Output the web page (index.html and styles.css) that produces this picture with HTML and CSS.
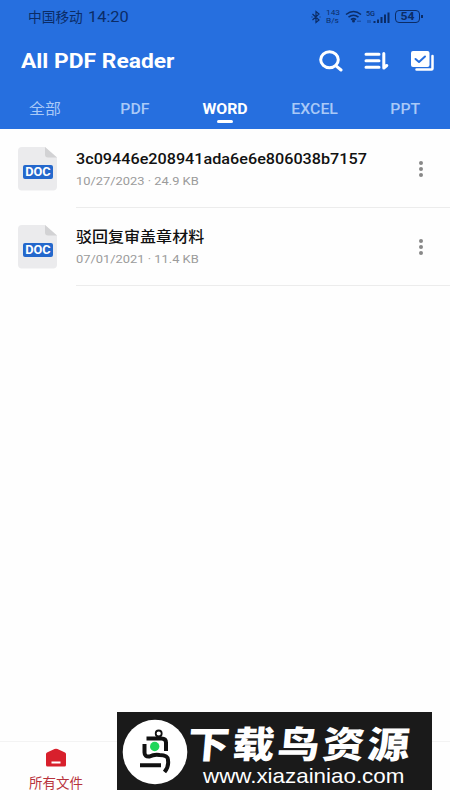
FILE: index.html
```
<!DOCTYPE html>
<html lang="zh-CN">
<head>
    <meta charset="UTF-8">
    <title>All PDF Reader</title>
    <link rel="stylesheet" href="styles.css">
</head>
<body>
<div class="page">
    <!-- 头部 -->
    <div class="header">
        <div class="status">
            <div class="carrier"><span class="name">中国移动</span><span class="time">14:20</span></div>
            <svg class="bluetooth" width="10" height="14" viewBox="0 0 10 14"><path d="M1.500 4l6.500 6-3 2.500v-11l3 2.500-6.500 6M.5 7h1M8.500 7h1"/></svg>
            <div class="speed"><span>143</span><span>B/s</span></div>
            <svg class="wifi" width="18" height="13" viewBox="0 0 18 13"><path d="M1 4.500q7.500-6 15 0M3.500 7.200q5-4 10 0M6 9.600q2.500-2 5 0"/><circle cx="8.500" cy="11" r="1.500"/><path class="thin" d="M12 11.200h4"/></svg>
            <svg class="signal" width="25" height="14" viewBox="0 0 25 14"><text x="0" y="6" textLength="9" lengthAdjust="spacingAndGlyphs">5G</text><path class="thin" d="M2 10v3M4 10v3"/><path d="M8.500 11v2M12 9.500V13M15.500 7V13M19 4.500V13M22.500 2.500V13"/></svg>
            <div class="battery"><span>54</span></div>
        </div>
        <div class="bar">
            <h1><span>All PDF Reader</span></h1>
            <div class="tools">
                <svg width="24" height="22" viewBox="0 0 24 22"><ellipse cx="10.500" cy="9.800" rx="8.800" ry="8"/><path d="M17 15.800l5 4.200"/></svg>
                <svg width="25" height="20" viewBox="0 0 25 20"><path d="M2 3.200h13M2 9.700h13M2 16.200h13M19.800 2.500v14.500l3-2.500"/></svg>
                <svg class="check" width="25" height="22" viewBox="0 0 25 22"><rect x="1" y="1" width="18.500" height="16" rx="2"/><path d="M22.500 6v12.500q0 1-1 1H6.500"/><path class="tick" d="M5.500 9l3.500 3 6-5.500"/></svg>
            </div>
        </div>
        <ul class="tabs">
            <li><span>全部</span></li>
            <li><span>PDF</span></li>
            <li class="on"><span>WORD</span></li>
            <li><span>EXCEL</span></li>
            <li><span>PPT</span></li>
        </ul>
    </div>
    <!-- 文件列表 -->
    <ul class="files">
        <li>
            <svg class="doc" width="40" height="45" viewBox="0 0 40 45"><path class="paper" d="M4 1h23l12 10.500v29q0 4-4 4H4q-4 0-4-4V5q0-4 4-4z"/><path class="fold" d="M27 1l12 10.500h-9q-3 0-3-3z"/><rect x="5" y="19" width="30" height="14" rx="2"/><text x="7.200" y="30" textLength="25.500" lengthAdjust="spacingAndGlyphs">DOC</text></svg>
            <div class="info">
                <p class="title"><span class="latin">3c09446e208941ada6e6e806038b7157</span></p>
                <p class="meta"><span>10/27/2023 · 24.9 KB</span></p>
            </div>
            <div class="more"><i></i><i></i><i></i></div>
        </li>
        <li>
            <svg class="doc" width="40" height="45" viewBox="0 0 40 45"><path class="paper" d="M4 1h23l12 10.500v29q0 4-4 4H4q-4 0-4-4V5q0-4 4-4z"/><path class="fold" d="M27 1l12 10.500h-9q-3 0-3-3z"/><rect x="5" y="19" width="30" height="14" rx="2"/><text x="7.200" y="30" textLength="25.500" lengthAdjust="spacingAndGlyphs">DOC</text></svg>
            <div class="info">
                <p class="title"><span class="cjk">驳回复审盖章材料</span></p>
                <p class="meta"><span>07/01/2021 · 11.4 KB</span></p>
            </div>
            <div class="more"><i></i><i></i><i></i></div>
        </li>
    </ul>
    <!-- 底部导航 -->
    <div class="footer">
        <div class="all">
            <svg width="22" height="19" viewBox="0 0 22 19"><path d="M2 4.500L9.500 1q1.500-.7 3 0L20 4.500q1 .5 1 1.500v11q0 1.500-1.500 1.500h-17Q1 18.500 1 17V6q0-1 1-1.500z"/><rect x="6.500" y="13.500" width="9" height="2"/></svg>
            <span>所有文件</span>
        </div>
    </div>
    <!-- 水印 -->
    <div class="mark">
        <svg width="66" height="66" viewBox="0 0 66 66"><circle cx="33" cy="33" r="32.300"/><path d="M24.500 19.500h15q4.500 0 4.500 4V32M22.500 25v8.500q0 4.500 5 4q5-2.500 10-1.500q9 0 8.500 5.500q1 6-3.500 11.500M18 46.200h21"/><circle class="loop" cx="36.700" cy="14.500" r="3"/><circle class="eye" cx="32.700" cy="27.500" r="4.700"/></svg>
        <div class="words">
            <b>下载鸟资源</b>
            <span>www.xiazainiao.com</span>
        </div>
    </div>
</div>
</body>
</html>
```
FILE: styles.css
```
*{
    margin: 0;
    padding: 0;
    box-sizing: border-box;
}
body{
    font-family: Roboto, "Noto Sans CJK SC", sans-serif;
    background: #fefefe;
}
ul{
    list-style: none;
}
svg{
    display: block;
    flex: none;
}
.page{
    position: relative;
    display: flex;
    flex-direction: column;
    width: 450px;
    height: 800px;
    overflow: hidden;
}
/* 文字整体横向拉宽 */
h1 span,
.time,
.title span,
.meta span,
.tabs span{
    display: inline-block;
    white-space: nowrap;
    transform-origin: left center;
}

/* 头部 */
.header{
    height: 129px;
    background: #266fdf;
}
.status{
    display: flex;
    align-items: center;
    height: 33px;
    padding: 0 30px 0 28px;
    color: #0b2c66;
}
.carrier{
    display: flex;
    align-items: center;
    flex: 1;
    line-height: 20px;
}
.carrier .name{
    font-size: 13.7px;
    margin-right: 5px;
}
.time{
    font-size: 15px;
    transform: scaleX(1.09);
}
.bluetooth{
    margin-right: 5px;
    fill: none;
    stroke: #0b2c66;
    stroke-width: 1.2;
}
.speed{
    width: 19px;
    font-size: 7.5px;
    line-height: 8px;
}
.speed span{
    display: block;
    height: 8px;
    transform: scaleX(1.1);
    transform-origin: left center;
}
.wifi{
    fill: none;
    stroke: #0b2c66;
    stroke-width: 1.6;
}
.wifi circle{
    fill: #0b2c66;
    stroke: none;
}
.wifi .thin,
.signal .thin{
    stroke-width: 1;
    opacity: .6;
}
.signal{
    margin: 0 4px 0 3px;
    stroke: #0b2c66;
    stroke-width: 2;
}
.signal text{
    font-size: 7px;
    font-weight: 500;
    fill: #0b2c66;
    stroke: none;
}
.battery{
    position: relative;
    width: 25px;
    height: 13px;
    border: 1px solid #0b2c66;
    border-radius: 4px;
    font-size: 11px;
    font-weight: bold;
    line-height: 11px;
    text-align: center;
}
.battery span{
    display: block;
    transform: scaleX(1.1);
}
.battery:after{
    content: "";
    position: absolute;
    right: -4px;
    top: 4px;
    width: 2px;
    height: 3px;
    background: #0b2c66;
}
.bar{
    display: flex;
    align-items: center;
    justify-content: space-between;
    height: 56px;
    padding: 0 15px 0 21px;
    color: #fff;
}
h1{
    font-size: 21px;
    line-height: 28px;
}
h1 span{
    transform: scaleX(1.086);
}
.tools{
    display: flex;
    align-items: center;
    gap: 21px;
}
.tools svg{
    fill: none;
    stroke: #fff;
    stroke-width: 3;
    stroke-linecap: round;
    stroke-linejoin: round;
}
.tools .check rect{
    fill: #fff;
    stroke: none;
}
.tools .check path{
    stroke-width: 2.5;
}
.tools .check .tick{
    stroke: #266fdf;
    stroke-width: 2;
}
.tabs{
    display: flex;
}
.tabs li{
    display: flex;
    flex-direction: column;
    align-items: center;
    width: 90px;
    height: 40px;
    font-size: 14px;
    font-weight: 500;
    line-height: 41px;
    color: #a9c9f7;
}
.tabs span{
    height: 39px;
    transform: scaleX(1.13);
    transform-origin: center;
}
.tabs li:first-child span{
    font-size: 15px;
    font-weight: 400;
    transform: scaleX(1.06);
}
.tabs .on{
    font-weight: bold;
    color: #fff;
}
.tabs .on:after{
    content: "";
    width: 16px;
    height: 3px;
    margin-top: -8px;
    border-radius: 2px;
    background: #fff;
}

/* 文件列表 */
.files{
    flex: 1;
    padding-top: 1px;
}
.files li{
    display: flex;
    height: 78px;
    padding-left: 18px;
}
.doc{
    margin: 16px 18px 0 0;
}
.doc .paper{
    fill: #ebebed;
}
.doc .fold{
    fill: #d2d2d4;
}
.doc rect{
    fill: #2468cc;
}
.doc text{
    font-size: 12px;
    font-weight: bold;
    fill: #fff;
}
.info{
    flex: 1;
    padding-top: 18px;
    border-bottom: 1px solid #ececec;
}
.title{
    height: 21px;
    font-size: 14px;
    font-weight: 500;
    line-height: 22px;
    color: #111;
}
.title .latin{
    transform: scaleX(1.156);
}
.title .cjk{
    font-size: 14.5px;
    transform: scaleX(1.105);
}
.meta{
    margin-top: 3px;
    font-size: 11.5px;
    line-height: 18px;
    color: #9b9b9b;
}
.meta span{
    transform: scaleX(1.12);
}
.more{
    display: flex;
    flex-direction: column;
    align-items: center;
    gap: 2px;
    width: 58px;
    padding-top: 31px;
    border-bottom: 1px solid #ececec;
}
.more i{
    width: 4px;
    height: 4px;
    border-radius: 50%;
    background: #888;
}

/* 底部导航 */
.footer{
    height: 59px;
    border-top: 1px solid #f3f3f3;
}
.all{
    display: flex;
    flex-direction: column;
    align-items: center;
    width: 112px;
    padding-top: 6px;
    font-size: 13.5px;
    line-height: 20px;
    color: #b8323c;
}
.all svg{
    margin-bottom: 6px;
    fill: #d8202c;
}
.all rect{
    fill: #fff;
}

/* 水印 */
.mark{
    position: absolute;
    left: 117px;
    top: 712px;
    display: flex;
    width: 315px;
    height: 78px;
    padding: 7px 0 0 5px;
    background: #1a1a1a;
    color: #fff;
}
.mark svg{
    fill: none;
    stroke: #111;
    stroke-width: 4;
}
.mark circle{
    fill: #fff;
    stroke: none;
}
.mark .loop{
    fill: none;
    stroke: #111;
    stroke-width: 1.8;
}
.mark .eye{
    fill: #20d65a;
}
.words{
    display: flex;
    flex-direction: column;
    align-items: flex-start;
}
.words b{
    font-size: 42px;
    font-weight: 900;
    line-height: 54px;
    height: 45px;
    letter-spacing: 3px;
    white-space: nowrap;
    transform: skewX(-5deg) scaleY(.88);
}
.words span{
    margin-left: 15px;
    font-family: "Liberation Sans", sans-serif;
    font-size: 21px;
    line-height: 24px;
    transform: scaleX(1.065);
    transform-origin: left center;
}
```
